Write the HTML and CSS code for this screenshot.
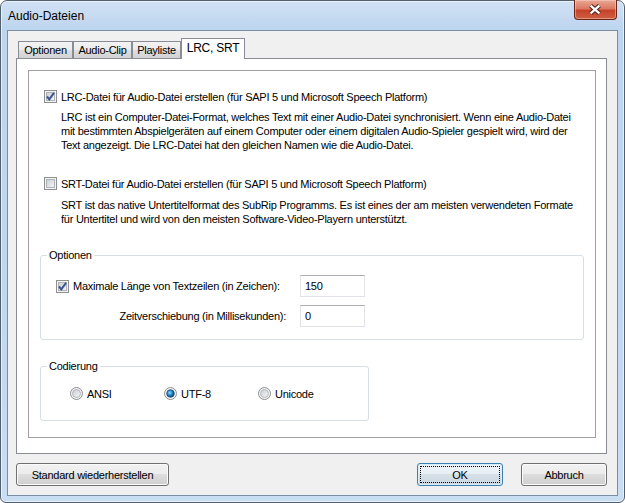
FILE: index.html
```html
<!DOCTYPE html>
<html lang="de">
<head>
<meta charset="utf-8">
<title>Audio-Dateien</title>
<link rel="stylesheet" href="styles.css">
</head>
<body>
<!--Fenster-->
<div class="window">
  <div class="titlebar">
    <span class="title">Audio-Dateien</span>
    <span class="close">
      <svg width="43" height="20" viewBox="0 0 43 20">
        <path d="M17 5.5 L26 13.5 M26 5.5 L17 13.5" stroke="#4a1c14" stroke-width="4.4" fill="none"/>
        <path d="M17 5.5 L26 13.5 M26 5.5 L17 13.5" stroke="#fff" stroke-width="2.4" fill="none"/>
      </svg>
    </span>
  </div>

  <div class="client">
    <!--Registerkarten-->
    <div class="tabs">
      <span class="tab t1">Optionen</span>
      <span class="tab t2">Audio-Clip</span>
      <span class="tab t3">Playliste</span>
      <span class="tab t4 active">LRC, SRT</span>
    </div>

    <div class="tabpanel">
      <div class="page">
        <div class="check-row first">
          <svg class="cb" width="13" height="13" viewBox="0 0 13 13">
            <defs><linearGradient id="cg1" x1="0" y1="0" x2="1" y2="1"><stop offset="0" stop-color="#c9cdd3"/><stop offset="1" stop-color="#f7f7f7"/></linearGradient></defs>
            <rect x="0.5" y="0.5" width="12" height="12" fill="#f4f4f4" stroke="#8e8f8f"/>
            <rect x="2.5" y="2.5" width="8" height="8" fill="url(#cg1)" stroke="#aeb3b9"/>
            <path d="M3 6.5 L5.3 9.3 L10 2.8" stroke="#3b5592" stroke-width="2" fill="none"/>
          </svg>
          <span>LRC-Datei für Audio-Datei erstellen (für SAPI 5 und Microsoft Speech Platform)</span>
        </div>
        <p class="desc">LRC ist ein Computer-Datei-Format, welches Text mit einer Audio-Datei synchronisiert. Wenn eine Audio-Datei<br>mit bestimmten Abspielgeräten auf einem Computer oder einem digitalen Audio-Spieler gespielt wird, wird der<br>Text angezeigt. Die LRC-Datei hat den gleichen Namen wie die Audio-Datei.</p>

        <div class="check-row second">
          <svg class="cb" width="13" height="13" viewBox="0 0 13 13">
            <defs><linearGradient id="cg2" x1="0" y1="0" x2="1" y2="1"><stop offset="0" stop-color="#c9cdd3"/><stop offset="1" stop-color="#f7f7f7"/></linearGradient></defs>
            <rect x="0.5" y="0.5" width="12" height="12" fill="#f4f4f4" stroke="#8e8f8f"/>
            <rect x="2.5" y="2.5" width="8" height="8" fill="url(#cg2)" stroke="#aeb3b9"/>
          </svg>
          <span>SRT-Datei für Audio-Datei erstellen (für SAPI 5 und Microsoft Speech Platform)</span>
        </div>
        <p class="desc d2">SRT ist das native Untertitelformat des SubRip Programms. Es ist eines der am meisten verwendeten Formate<br>für Untertitel und wird von den meisten Software-Video-Playern unterstützt.</p>

        <!--Optionen-->
        <fieldset class="group opts">
          <legend>Optionen</legend>
          <div class="opt-grid">
            <div class="check-row">
              <svg class="cb" width="13" height="13" viewBox="0 0 13 13">
                <defs><linearGradient id="cg3" x1="0" y1="0" x2="1" y2="1"><stop offset="0" stop-color="#c9cdd3"/><stop offset="1" stop-color="#f7f7f7"/></linearGradient></defs>
                <rect x="0.5" y="0.5" width="12" height="12" fill="#f4f4f4" stroke="#8e8f8f"/>
                <rect x="2.5" y="2.5" width="8" height="8" fill="url(#cg3)" stroke="#aeb3b9"/>
                <path d="M3 6.5 L5.3 9.3 L10 2.8" stroke="#3b5592" stroke-width="2" fill="none"/>
              </svg>
              <span>Maximale Länge von Textzeilen (in Zeichen):</span>
            </div>
            <input class="field" type="text" value="150">
            <span class="right">Zeitverschiebung (in Millisekunden):</span>
            <input class="field" type="text" value="0">
          </div>
        </fieldset>

        <!--Codierung-->
        <fieldset class="group enc">
          <legend>Codierung</legend>
          <div class="radios">
            <div class="radio">
              <svg width="13" height="13" viewBox="0 0 13 13">
                <defs><linearGradient id="rg1" x1="0" y1="0" x2="1" y2="1"><stop offset="0" stop-color="#c9cdd3"/><stop offset="1" stop-color="#f7f7f7"/></linearGradient></defs>
                <circle cx="6.5" cy="6.5" r="6" fill="#f4f4f4" stroke="#8e8f8f"/>
                <circle cx="6.5" cy="6.5" r="4" fill="url(#rg1)" stroke="#b3b7bd"/>
              </svg>
              <span>ANSI</span>
            </div>
            <div class="radio">
              <svg width="13" height="13" viewBox="0 0 13 13">
                <defs><radialGradient id="rd" cx="0.4" cy="0.4" r="0.6"><stop offset="0" stop-color="#8fe0fb"/><stop offset="0.5" stop-color="#2a8fd0"/><stop offset="1" stop-color="#0d3f73"/></radialGradient></defs>
                <circle cx="6.5" cy="6.5" r="6" fill="#f4f4f4" stroke="#8e8f8f"/>
                <circle cx="6.5" cy="6.5" r="3.8" fill="url(#rd)" stroke="#1d4a78" stroke-width="0.8"/>
              </svg>
              <span>UTF-8</span>
            </div>
            <div class="radio">
              <svg width="13" height="13" viewBox="0 0 13 13">
                <defs><linearGradient id="rg3" x1="0" y1="0" x2="1" y2="1"><stop offset="0" stop-color="#c9cdd3"/><stop offset="1" stop-color="#f7f7f7"/></linearGradient></defs>
                <circle cx="6.5" cy="6.5" r="6" fill="#f4f4f4" stroke="#8e8f8f"/>
                <circle cx="6.5" cy="6.5" r="4" fill="url(#rg3)" stroke="#b3b7bd"/>
              </svg>
              <span>Unicode</span>
            </div>
          </div>
        </fieldset>
      </div>
    </div>

    <!--Schaltflaechen-->
    <div class="buttons">
      <button class="btn std" type="button">Standard wiederherstellen</button>
      <button class="btn ok" type="button">OK</button>
      <button class="btn cancel" type="button">Abbruch</button>
    </div>
  </div>
</div>
</body>
</html>
```

FILE: styles.css
```css
/*Grundeinstellungen*/
*{box-sizing:border-box;}
body{margin:0; font:11px "Liberation Sans", Arial, sans-serif; letter-spacing:-0.25px; color:#000; background:#fff;}
p{margin:0;}

/*Fenster*/
.window{width:625px; height:503px; border:1px solid #50606f; border-radius:7px 7px 6px 6px; padding:0 6px 6px; display:flex; flex-direction:column;
  background:linear-gradient(#d0e1f4 0, #bed5ef 28px, #c1d7f0 60%, #c9ddf3 100%);
  box-shadow:inset 0 0 0 1px rgba(255,255,255,.6);}
.titlebar{height:29px; display:flex; justify-content:space-between; align-items:flex-start;}
.title{font-size:12px; letter-spacing:0; padding:8px 0 0 1px;}
.close{width:43px; height:20px; margin:-1px 1px 0 0; border:1px solid #6b261b; border-top:none; border-radius:0 0 4px 4px; display:flex;
  background:linear-gradient(#e9a894 0, #dc7a63 45%, #c5432a 55%, #d05f3f 100%);
  box-shadow:inset 0 0 0 1px rgba(255,220,210,.45);}
.close svg{margin-left:-1px;}

/*Client*/
.client{flex:1; border:1px solid #7a8da3; background:#f0f0f0; padding:7px 10px 9px 8px; display:flex; flex-direction:column;}

/*Registerkarten*/
.tabs{height:20px; display:flex; align-items:flex-end; padding-left:2px;}
.tab{height:17px; border:1px solid #898c95; border-bottom:none; display:flex; align-items:center; justify-content:center; white-space:nowrap;
  background:linear-gradient(#f3f3f3 0, #ebebeb 50%, #dedede 50%, #d2d2d2 100%);}
.t1{width:55px;}
.t2{width:59px;}
.t3{width:49px;}
.t4{width:64px;}
.tab.active{height:21px; margin-bottom:-1px; background:#fff; position:relative; z-index:1; font-size:12px; padding-bottom:2px;}
.tabpanel{height:396px; border:1px solid #898c95; background:#fff; padding:11px 10px 15px 11px;}
.page{height:100%; border:1px solid #a0a0a0;}

/*Optionen*/
.check-row{display:flex; align-items:center; gap:4px; height:13px; white-space:nowrap;}
.cb{flex:none;}
.first{margin:19px 0 0 15px;}
.second{margin:25px 0 0 15px;}
.desc{margin:7px 0 0 32px; line-height:14px; white-space:nowrap;}
.d2{margin-top:8px;}

.group{border:1px solid #d5dfe5; border-radius:3px; padding:0 0 0 6px; margin:0 11px; min-width:0;}
.group legend{padding:0 2px; line-height:13px;}
.opts{margin-top:23px;}
.opt-grid{display:grid; grid-template-columns:230px 65px; column-gap:14px; row-gap:8px; align-items:center; padding:13px 0 12px 9px;}
.right{justify-self:end; white-space:nowrap;}
.field{width:65px; height:22px; border:1px solid #e2e3ea; border-top-color:#abadb3; font:11px "Liberation Sans", Arial, sans-serif; letter-spacing:-0.25px; padding:0 4px; margin:0; color:#000; background:#fff;}

.enc{width:329px; margin-top:20px;}
.radios{display:flex; padding:14px 0 20px 23px;}
.radio{width:94px; display:flex; align-items:center; gap:4px; height:13px;}

/*Schaltflaechen*/
.buttons{display:flex; margin-top:9px;}
.btn{height:23px; border:1px solid #707070; border-radius:3px; font:11px "Liberation Sans", Arial, sans-serif; letter-spacing:-0.25px; color:#000; padding:0; margin:0;
  background:linear-gradient(#f2f2f2 0, #ebebeb 50%, #dddddd 50%, #cfcfcf 100%);
  box-shadow:inset 0 0 0 1px #fbfbfb;}
.std{width:153px;}
.ok{width:86px; margin-left:auto; border-color:#3c7fb1; outline:1px dotted #000; outline-offset:-4px;
  background:linear-gradient(#eef4f9 0, #e6eef5 50%, #d6e0e9 50%, #ccd7e1 100%);
  box-shadow:inset 0 0 0 1px #d8eefb;}
.cancel{width:86px; margin-left:18px;}
```
